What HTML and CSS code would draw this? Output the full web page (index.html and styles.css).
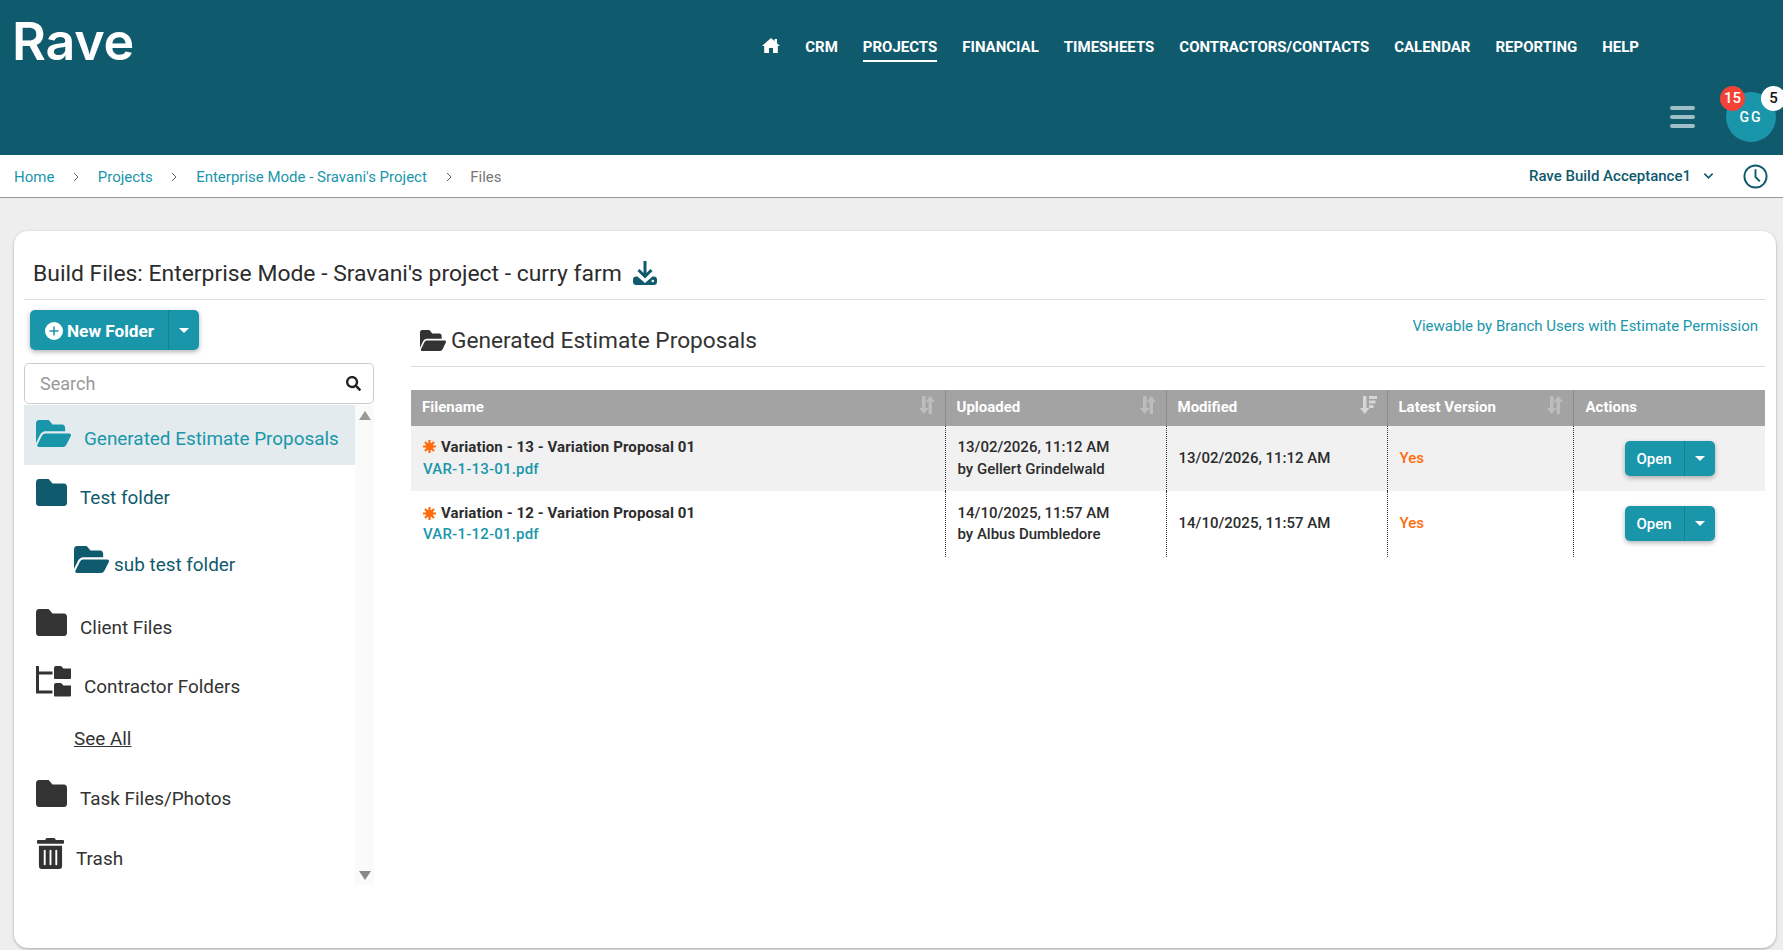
FILE: index.html
```html
<!DOCTYPE html>
<html lang="en">
<head>
<meta charset="utf-8">
<title>Build Files</title>
<link rel="stylesheet" href="styles.css">
</head>
<body>
<header class="topbar">
  <div class="logo">Rave</div>
  <div class="topbar-right">
    <nav class="nav">
      <a class="nav-home" href="#"><svg viewBox="0 0 18 15" width="18" height="15"><path fill="#fff" d="M9 0 L12.500 3V1H15V5.200L18 8H15.800V15H11V10H7V15H2.200V8H0Z"/></svg></a>
      <a href="#">CRM</a>
      <a class="active" href="#">PROJECTS</a>
      <a href="#">FINANCIAL</a>
      <a href="#">TIMESHEETS</a>
      <a href="#">CONTRACTORS/CONTACTS</a>
      <a href="#">CALENDAR</a>
      <a href="#">REPORTING</a>
      <a href="#">HELP</a>
    </nav>
    <div class="user-row">
      <div class="hamburger"><span></span><span></span><span></span></div>
      <div class="avatar">GG
        <span class="badge badge-red">15</span>
        <span class="badge badge-white">5</span>
      </div>
    </div>
  </div>
</header>
<div class="crumbbar">
  <ol class="crumbs">
    <li><a href="#">Home</a></li>
    <li class="sep"><svg viewBox="0 0 6 10" width="6" height="10"><path d="M1 1l4 4-4 4" fill="none" stroke="#666" stroke-width="1"/></svg></li>
    <li><a href="#">Projects</a></li>
    <li class="sep"><svg viewBox="0 0 6 10" width="6" height="10"><path d="M1 1l4 4-4 4" fill="none" stroke="#666" stroke-width="1"/></svg></li>
    <li><a href="#">Enterprise Mode - Sravani's Project</a></li>
    <li class="sep"><svg viewBox="0 0 6 10" width="6" height="10"><path d="M1 1l4 4-4 4" fill="none" stroke="#666" stroke-width="1"/></svg></li>
    <li class="current">Files</li>
  </ol>
  <div class="crumb-right">
    <span class="company">Rave Build Acceptance1</span>
    <svg class="company-caret" viewBox="0 0 12 8" width="11" height="8"><path d="M1.500 1.500L6 6l4.500-4.500" fill="none" stroke="#105a6e" stroke-width="1.800"/></svg>
    <svg class="clock" viewBox="0 0 26 26" width="25" height="25"><circle cx="13" cy="13" r="11.500" fill="none" stroke="#105a6e" stroke-width="2"/><path d="M13 5.500V13.500L17.500 18" fill="none" stroke="#105a6e" stroke-width="2"/></svg>
  </div>
</div>
<main class="card">
  <div class="card-title">
    <h1>Build Files: Enterprise Mode - Sravani's project - curry farm</h1>
    <svg class="dl" viewBox="0 0 24 24" width="24" height="24"><path fill="none" stroke="#105a6e" stroke-width="3" d="M12 0V15M5.500 9L12 15.500 18.500 9"/><path fill="#105a6e" d="M3 15.500h1.500L12 22 19.500 15.500H21c1.700 0 3 1.300 3 3v2.500c0 1.700-1.300 3-3 3H3c-1.700 0-3-1.300-3-3v-2.500c0-1.700 1.300-3 3-3z"/><circle cx="19.800" cy="20" r="1.300" fill="#fff"/></svg>
  </div>
  <div class="card-body">
    <aside class="side">
      <div class="split-btn split-new">
        <button class="btn-main"><svg viewBox="0 0 18 18" width="18" height="18"><circle cx="9" cy="9" r="9" fill="#fff"/><path d="M9 4.500v9M4.500 9h9" stroke="#1a96ab" stroke-width="1.500"/></svg>New Folder</button>
        <button class="btn-caret"><span class="caret"></span></button>
      </div>
      <div class="search">
        <span class="search-ph">Search</span>
        <svg viewBox="0 0 512 512" width="15" height="15"><path fill="#222" d="M505 442.700L405.300 343c-4.500-4.500-10.600-7-17-7H372c27.600-35.300 44-79.700 44-128C416 93.100 322.900 0 208 0S0 93.100 0 208s93.100 208 208 208c48.300 0 92.700-16.400 128-44v16.300c0 6.400 2.500 12.500 7 17l99.700 99.700c9.400 9.400 24.600 9.400 33.900 0l28.300-28.300c9.400-9.400 9.400-24.600.1-34zM208 336c-70.700 0-128-57.200-128-128 0-70.700 57.200-128 128-128 70.700 0 128 57.200 128 128 0 70.700-57.200 128-128 128z"/></svg>
      </div>
      <div class="tree-wrap">
        <ul class="tree">
          <li class="item item-gen">
            <svg class="ico-open" viewBox="0 64 576 384" preserveAspectRatio="none"><path fill="#1a96ab" d="M572.694 292.093L500.27 416.248A63.997 63.997 0 0 1 444.989 448H45.025c-18.523 0-30.064-20.093-20.731-36.093l72.424-124.155A64 64 0 0 1 152 256h399.964c18.523 0 30.064 20.093 20.73 36.093zM152 224h328v-48c0-26.51-21.49-48-48-48H272l-64-64H48C21.49 64 0 85.49 0 112v278.046l69.077-118.418C86.214 242.25 117.989 224 152 224z"/></svg>
            <span class="label">Generated Estimate Proposals</span>
          </li>
          <li class="item item-test">
            <svg class="ico-folder" viewBox="0 64 512 384" preserveAspectRatio="none"><path fill="#105a6e" d="M464 128H272l-64-64H48C21.49 64 0 85.49 0 112v288c0 26.51 21.49 48 48 48h416c26.51 0 48-21.49 48-48V176c0-26.51-21.49-48-48-48z"/></svg>
            <span class="label">Test folder</span>
          </li>
          <li class="item item-sub">
            <svg class="ico-open" viewBox="0 64 576 384" preserveAspectRatio="none"><path fill="#105a6e" d="M572.694 292.093L500.27 416.248A63.997 63.997 0 0 1 444.989 448H45.025c-18.523 0-30.064-20.093-20.731-36.093l72.424-124.155A64 64 0 0 1 152 256h399.964c18.523 0 30.064 20.093 20.73 36.093zM152 224h328v-48c0-26.51-21.49-48-48-48H272l-64-64H48C21.49 64 0 85.49 0 112v278.046l69.077-118.418C86.214 242.25 117.989 224 152 224z"/></svg>
            <span class="label">sub test folder</span>
          </li>
          <li class="item item-client">
            <svg class="ico-folder" viewBox="0 64 512 384" preserveAspectRatio="none"><path fill="#333" d="M464 128H272l-64-64H48C21.49 64 0 85.49 0 112v288c0 26.51 21.49 48 48 48h416c26.51 0 48-21.49 48-48V176c0-26.51-21.49-48-48-48z"/></svg>
            <span class="label">Client Files</span>
          </li>
          <li class="item item-contractor">
            <svg class="ico-tree" viewBox="0 0 35 32"><path fill="none" stroke="#333" stroke-width="3" d="M1.500 1v26h15M1.500 8h15"/><path fill="#333" d="M20 1h5l2.500 2.500H35v9.500a1 1 0 0 1-1 1H19a1 1 0 0 1-1-1V3a2 2 0 0 1 2-2zM20 18h5l2.500 2.500H35v10a1 1 0 0 1-1 1H19a1 1 0 0 1-1-1V20a2 2 0 0 1 2-2z"/></svg>
            <span class="label">Contractor Folders</span>
          </li>
          <li class="item item-seeall"><a href="#">See All</a></li>
          <li class="item item-task">
            <svg class="ico-folder" viewBox="0 64 512 384" preserveAspectRatio="none"><path fill="#333" d="M464 128H272l-64-64H48C21.49 64 0 85.49 0 112v288c0 26.51 21.49 48 48 48h416c26.51 0 48-21.49 48-48V176c0-26.51-21.49-48-48-48z"/></svg>
            <span class="label">Task Files/Photos</span>
          </li>
          <li class="item item-trash">
            <svg class="ico-trash" viewBox="0 0 448 512" preserveAspectRatio="none"><path fill="#333" d="M32 464a48 48 0 0 0 48 48h288a48 48 0 0 0 48-48V128H32zm272-256a16 16 0 0 1 32 0v224a16 16 0 0 1-32 0zm-96 0a16 16 0 0 1 32 0v224a16 16 0 0 1-32 0zm-96 0a16 16 0 0 1 32 0v224a16 16 0 0 1-32 0zM432 32H312l-9.400-18.700A24 24 0 0 0 281.100 0H166.800a23.720 23.720 0 0 0-21.400 13.300L136 32H16A16 16 0 0 0 0 48v32a16 16 0 0 0 16 16h416a16 16 0 0 0 16-16V48a16 16 0 0 0-16-16z"/></svg>
            <span class="label">Trash</span>
          </li>
        </ul>
        <div class="scrollbar"><span class="tri-up"></span><span class="tri-down"></span></div>
      </div>
    </aside>
    <section class="content">
      <div class="content-head">
        <div class="content-title">
          <svg viewBox="0 64 576 384" preserveAspectRatio="none" width="26" height="21"><path fill="#333" d="M572.694 292.093L500.27 416.248A63.997 63.997 0 0 1 444.989 448H45.025c-18.523 0-30.064-20.093-20.731-36.093l72.424-124.155A64 64 0 0 1 152 256h399.964c18.523 0 30.064 20.093 20.73 36.093zM152 224h328v-48c0-26.51-21.49-48-48-48H272l-64-64H48C21.49 64 0 85.49 0 112v278.046l69.077-118.418C86.214 242.25 117.989 224 152 224z"/></svg>
          <h2>Generated Estimate Proposals</h2>
        </div>
        <a class="viewable" href="#">Viewable by Branch Users with Estimate Permission</a>
      </div>
      <table class="files">
        <colgroup><col class="c1"><col class="c2"><col class="c3"><col class="c4"><col class="c5"></colgroup>
        <thead>
          <tr>
            <th>Filename<svg class="sort" viewBox="0 0 16 18" width="16" height="18"><path d="M3 0h3.500v12H9.500L4.750 18 0 12h3zM9.500 6H6.500L11.250 0 16 6h-3v12H9.500z" fill="#bdbdbd"/></svg></th>
            <th>Uploaded<svg class="sort" viewBox="0 0 16 18" width="16" height="18"><path d="M3 0h3.500v12H9.500L4.750 18 0 12h3zM9.500 6H6.500L11.250 0 16 6h-3v12H9.500z" fill="#bdbdbd"/></svg></th>
            <th>Modified<svg class="sort" viewBox="0 0 17 18" width="17" height="18"><path d="M3 0h3.500v12H9.500L4.750 18 0 12h3z" fill="#d6d6d6"/><path d="M9 0h8v3H9zM9 4.500h6.500v3H9zM9 9h4.500v3H9z" fill="#d6d6d6"/></svg></th>
            <th>Latest Version<svg class="sort" viewBox="0 0 16 18" width="16" height="18"><path d="M3 0h3.500v12H9.500L4.750 18 0 12h3zM9.500 6H6.500L11.250 0 16 6h-3v12H9.500z" fill="#bdbdbd"/></svg></th>
            <th class="last">Actions</th>
          </tr>
        </thead>
        <tbody>
          <tr class="odd">
            <td><div class="name"><svg viewBox="0 0 12 12" width="13" height="13"><circle cx="6" cy="6" r="3.500" fill="#ff6c0c"/><path d="M6 0v12M0 6h12M1.800 1.800l8.400 8.400M1.800 10.200l8.400-8.400" stroke="#ff6c0c" stroke-width="2"/></svg>Variation - 13 - Variation Proposal 01</div><a class="pdf" href="#">VAR-1-13-01.pdf</a></td>
            <td><div class="strong">13/02/2026, 11:12 AM</div><div class="strong">by Gellert Grindelwald</div></td>
            <td class="strong">13/02/2026, 11:12 AM</td>
            <td class="yes">Yes</td>
            <td class="act"><div class="split-btn split-open"><button class="btn-main">Open</button><button class="btn-caret"><span class="caret"></span></button></div></td>
          </tr>
          <tr>
            <td><div class="name"><svg viewBox="0 0 12 12" width="13" height="13"><circle cx="6" cy="6" r="3.500" fill="#ff6c0c"/><path d="M6 0v12M0 6h12M1.800 1.800l8.400 8.400M1.800 10.200l8.400-8.400" stroke="#ff6c0c" stroke-width="2"/></svg>Variation - 12 - Variation Proposal 01</div><a class="pdf" href="#">VAR-1-12-01.pdf</a></td>
            <td><div class="strong">14/10/2025, 11:57 AM</div><div class="strong">by Albus Dumbledore</div></td>
            <td class="strong">14/10/2025, 11:57 AM</td>
            <td class="yes">Yes</td>
            <td class="act"><div class="split-btn split-open"><button class="btn-main">Open</button><button class="btn-caret"><span class="caret"></span></button></div></td>
          </tr>
        </tbody>
      </table>
    </section>
  </div>
</main>
</body>
</html>
```
FILE: styles.css
```css
* { box-sizing: border-box; }
html, body { margin: 0; height: 100%; }
body {
  background: #eee;
  font-family: Roboto, "Liberation Sans", sans-serif;
  font-size: 15px;
  color: #333;
  overflow: hidden;
  width: 1783px;
  height: 950px;
}
a { text-decoration: none; color: inherit; }
h1, h2, ul, ol { margin: 0; padding: 0; list-style: none; }
button { font-family: inherit; border: 0; padding: 0; color: inherit; }

.topbar {
  height: 155px;
  background: #105a6e;
  display: flex;
  justify-content: space-between;
  position: relative;
}
.logo {
  font-family: Inter, Roboto, sans-serif;
  font-weight: 600;
  font-size: 52px;
  line-height: 60px;
  letter-spacing: -0.2px;
  color: #fff;
  padding: 12px 0 0 12px;
}
.topbar-right { display: flex; flex-direction: column; align-items: flex-end; }
.nav {
  display: flex;
  align-items: flex-start;
  gap: 25px;
  margin: 36px 144px 0 0;
}
.nav a {
  color: #fff;
  font-weight: 700;
  font-size: 15px;
  line-height: 22px;
  height: 26px;
}
.nav .active { border-bottom: 2px solid #fff; }
.nav .nav-home { display: flex; align-items: center; height: 22px; margin-top: -2px; }
.user-row {
  display: flex;
  align-items: center;
  gap: 31px;
  margin: 30px 7px 0 0;
}
.hamburger { display: flex; flex-direction: column; gap: 5px; width: 25px; }
.hamburger span { height: 4px; border-radius: 2px; background: #9fbfc8; }
.avatar {
  position: relative;
  width: 50px;
  height: 50px;
  border-radius: 50%;
  background: #1a96ab;
  color: #fff;
  font-weight: 500;
  font-size: 14px;
  letter-spacing: 2px;
  display: flex;
  align-items: center;
  justify-content: center;
}
.badge {
  position: absolute;
  top: -6px;
  width: 25px;
  height: 25px;
  border-radius: 50%;
  font-size: 15px;
  font-weight: 500;
  letter-spacing: 0;
  line-height: 25px;
  text-align: center;
}
.badge-red { left: -6px; background: #f44336; color: #fff; }
.badge-white { left: 35px; background: #fff; color: #111; }

.crumbbar {
  height: 43px;
  background: #fff;
  border-bottom: 1px solid #999;
  display: flex;
  justify-content: space-between;
  align-items: center;
}
.crumbs { display: flex; align-items: center; padding: 2px 0 0 14px; }
.crumbs a { color: #1a96ab; }
.crumbs .current { color: #777; }
.crumbs .sep { display: flex; width: 6px; margin: 0 18.700px; }
.crumb-right { display: flex; align-items: center; padding-right: 15px; }
.company { font-weight: 500; color: #105a6e; }
.company-caret { margin: 0 29px 0 12px; }

.card {
  margin: 33px 0 0 14px;
  width: 1762px;
  height: 717px;
  background: #fff;
  border-radius: 14px;
  box-shadow: 0 1px 3px rgba(0,0,0,.3);
  padding: 0 10px;
}
.card-title {
  height: 69px;
  border-bottom: 1px solid #ddd;
  display: flex;
  align-items: flex-end;
  padding: 0 0 5px 9px;
  gap: 11px;
}
.card-title h1 { font-size: 22.900px; font-weight: 400; line-height: 40px; color: #2c2c2c; }
.dl { margin-bottom: 9px; }
.card-body { display: flex; }
.side { width: 350px; flex: none; padding-top: 10px; }

.split-btn {
  display: flex;
  background: #1a96ab;
  border-radius: 5px;
  box-shadow: 0 2px 5px rgba(0,0,0,.3);
  color: #fff;
}
.btn-main {
  background: none;
  font-weight: 500;
  display: flex;
  align-items: center;
  justify-content: center;
  color: #fff;
}
.btn-caret {
  background: none;
  border-left: 1px solid #16808f;
  display: flex;
  align-items: center;
  justify-content: center;
}
.caret {
  border-top: 5px solid #fff;
  border-left: 5px solid transparent;
  border-right: 5px solid transparent;
}
.split-new { width: 169px; height: 40px; margin-left: 6px; }
.split-new .btn-main { width: 138px; gap: 4px; font-size: 17.200px; font-weight: 700; padding: 1px 0 0 1px; }
.split-new .btn-caret { width: 31px; }
.search {
  margin-top: 13px;
  height: 41px;
  border: 1px solid #ccc;
  border-radius: 5px;
  padding: 0 12px 0 15px;
  display: flex;
  justify-content: space-between;
  align-items: center;
}
.search-ph { font-size: 18px; color: #999; }
.tree-wrap { display: flex; margin-top: 1px; height: 480px; }
.tree { width: 331px; flex: none; }
.scrollbar {
  width: 19px;
  background: #fafafa;
  display: flex;
  flex-direction: column;
  justify-content: space-between;
  align-items: center;
  padding: 6px 0 5px;
}
.tri-up { border-bottom: 9px solid #999; border-left: 6.500px solid transparent; border-right: 6.500px solid transparent; }
.tri-down { border-top: 9px solid #888; border-left: 6.500px solid transparent; border-right: 6.500px solid transparent; }

.item {
  display: flex;
  align-items: flex-start;
  padding-left: 12px;
  font-size: 18.900px;
  line-height: 22px;
  color: #333;
}
.label { margin: 8px 0 0 13px; }
.ico-open { width: 35px; height: 27px; flex: none; }
.ico-folder { width: 31px; height: 27px; flex: none; }
.ico-tree { width: 35px; height: 32px; flex: none; }
.ico-trash { width: 27px; height: 31px; flex: none; margin-left: 1px; }
.item-gen { height: 60px; padding-top: 15px; background: #e3ebee; color: #1a96ab; }
.item-test { height: 65px; padding-top: 14px; color: #105a6e; }
.item-sub { height: 65px; padding: 16px 0 0 50px; color: #105a6e; }
.item-sub .label { margin-left: 5px; }
.item-client { height: 55px; padding-top: 14px; }
.item-contractor { height: 65px; padding-top: 15px; }
.item-contractor .label { margin-top: 11px; }
.item-seeall { height: 50px; padding: 13px 0 0 50px; }
.item-seeall a { text-decoration: underline; }
.item-task { height: 60px; padding-top: 15px; }
.item-trash { height: 60px; padding-top: 13px; }
.item-trash .label { margin: 10px 0 0 12px; }

.content { flex: 1; padding-left: 37px; }
.content-head {
  height: 67px;
  border-bottom: 1px solid #ddd;
  display: flex;
  justify-content: space-between;
  margin-right: 1px;
}
.content-title { display: flex; align-items: center; gap: 5px; padding: 26px 0 0 9px; height: 56px; }
.content-title svg { margin-top: -2px; }
.content-title h2 { font-size: 22.700px; font-weight: 400; line-height: 30px; color: #333; }
.viewable { color: #1a96ab; line-height: 20px; padding: 16px 7px 0 0; }

.files {
  margin-top: 23px;
  width: 1354px;
  table-layout: fixed;
  border-collapse: collapse;
}
.c1 { width: 534px; }
.c2 { width: 221px; }
.c3 { width: 221px; }
.c4 { width: 186px; }
.c5 { width: 192px; }
.files th {
  position: relative;
  height: 36px;
  background: #a3a3a3;
  color: #fff;
  font-weight: 700;
  text-align: left;
  padding: 0 0 2px 11px;
  border-right: 1px solid #8d8d8d;
}
.files th.last { border-right: 0; padding-left: 12px; }
.sort { position: absolute; right: 10px; top: 6px; }
.files td {
  height: 65px;
  padding: 0 0 0 12px;
  border-right: 1px dotted #333;
  line-height: 22px;
}
.files td:last-child { border-right: 0; }
.files .odd td { padding-bottom: 2px; }
.files tbody tr:last-child td { height: 66px; vertical-align: top; padding-top: 12px; line-height: 21px; }
.files tbody tr:last-child td.strong,
.files tbody tr:last-child td.yes { padding-top: 22px; }
.files tbody tr:last-child td.act { padding-top: 15px; }
.odd td { background: #f1f1f1; }
.strong { font-weight: 500; color: #2c2c2c; }
.name { font-weight: 700; color: #2c2c2c; display: flex; align-items: center; gap: 5px; letter-spacing: 0.1px; }
.pdf { color: #1a96ab; font-weight: 500; letter-spacing: 0.2px; }
.yes { color: #ff6c0c; font-weight: 500; }
.files .act, .files .odd td.act { padding: 0 0 0 51px; }
.split-open { width: 90px; height: 35px; }
.split-open .btn-main { width: 59px; font-size: 15px; }
.split-open .btn-caret { width: 31px; }
```
